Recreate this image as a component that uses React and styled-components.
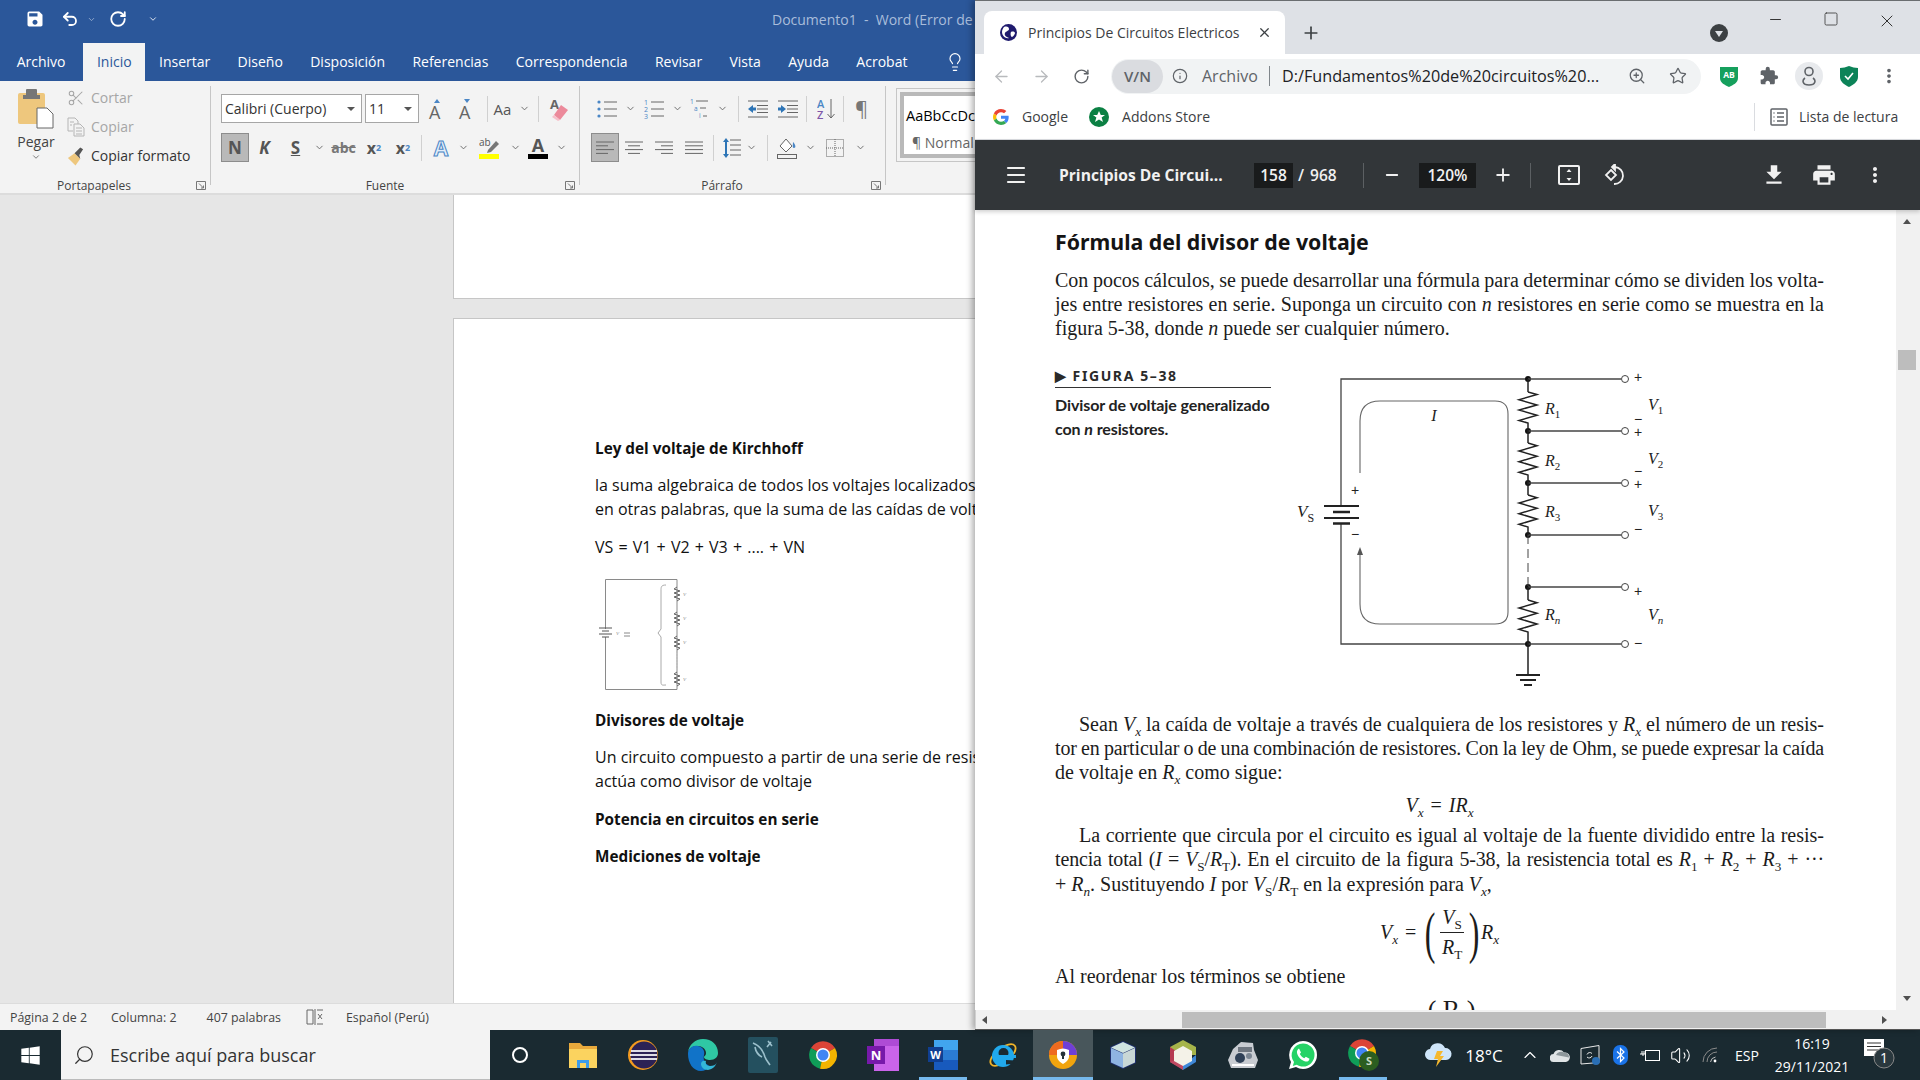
import styled, { createGlobalStyle } from "styled-components";
import {
  ArrowLeft,
  ArrowRight,
  ChevronDown,
  ChevronUp,
  Info,
  Lightbulb,
  Menu,
  Minus,
  Plus,
  RotateCw,
  Scissors,
  Search,
  Square,
  Star,
  Undo2,
  Volume2,
  X,
  ZoomIn,
} from "lucide-react";
import { FaWindows } from "react-icons/fa";
import { MdExtension, MdFileDownload, MdPrint, MdMoreVert, MdSave } from "react-icons/md";

const GlobalStyle = createGlobalStyle`
  html, body {
    margin: 0;
    padding: 0;
    width: 1920px;
    height: 1080px;
    overflow: hidden;
    font-family: "Open Sans", "Noto Sans", sans-serif;
  }
  * { box-sizing: border-box; }
`;

const Screen = styled.div`
  width: 1920px;
  height: 1080px;
  display: flex;
  flex-direction: column;
  overflow: hidden;
`;

const Desktop = styled.div`
  height: 1030px;
  display: flex;
`;

/* ---------- word ---------- */

const WordWindow = styled.div`
  width: 975px;
  flex: none;
  display: flex;
  flex-direction: column;
  overflow: hidden;
`;

const WordTitle = styled.div`
  height: 43px;
  background: #2b579a;
  display: flex;
  align-items: center;
  padding: 0 0 5px 25px;
  color: #fff;
  flex: none;
`;

const QatBtn = styled.span`
  width: ${(p) => p.$w}px;
  flex: none;
  margin-left: ${(p) => p.$ml || 0}px;
  display: flex;
  justify-content: center;
  align-items: center;
`;

const DocName = styled.span`
  margin-left: 605px;
  flex: none;
  font-size: 14px;
  color: #a9bdda;
  white-space: pre;
`;

const TabRow = styled.div`
  height: 38px;
  background: #2b579a;
  display: flex;
  padding-left: 3px;
  flex: none;
`;

const Tab = styled.div`
  padding: 2px 13.7px 0;
  font-size: 14px;
  line-height: 34px;
  flex: none;
  margin-left: ${(p) => p.$ml || 0}px;
  color: ${(p) => (p.$active ? "#2b579a" : "#fff")};
  background: ${(p) => (p.$active ? "#f3f3f3" : "transparent")};
`;

const BulbSlot = styled.div`
  margin-left: 24px;
  display: flex;
  align-items: center;
  color: #fff;
`;

const Ribbon = styled.div`
  height: 114px;
  background: #f3f3f3;
  border-bottom: 2px solid #dcdcdc;
  display: flex;
  flex: none;
`;

const Group = styled.div`
  width: ${(p) => p.$w}px;
  flex: none;
  padding: 5px 0 0;
  display: flex;
  flex-direction: column;
  position: relative;
  &::after {
    content: "";
    position: absolute;
    right: 0;
    top: 5px;
    bottom: 8px;
    width: 1px;
    background: #c6c6c6;
  }
`;

const GroupBody = styled.div`
  height: 91px;
  padding-left: ${(p) => p.$pl || 0}px;
`;

const GroupFoot = styled.div`
  display: grid;
  grid-template-columns: 1fr auto 1fr;
  align-items: center;
  font-size: 12px;
  height: 16px;
  color: #444;
  padding-right: 5px;
  & > svg {
    justify-self: end;
  }
`;

const FootLabel = styled.span`
  grid-column: 2;
  margin-right: ${(p) => p.$shift || 0}px;
`;

const ClipBody = styled.div`
  display: flex;
  height: 91px;
`;

const PasteCol = styled.div`
  width: 72px;
  padding: 3px 0 0;
  color: #444;
  font-size: 14px;
  display: flex;
  flex-direction: column;
  align-items: center;
  line-height: 20px;
`;

const PasteLabel = styled.span`
  margin-top: 3px;
`;

const ClipList = styled.div`
  display: flex;
  flex-direction: column;
  margin-top: -3px;
  margin-left: -5px;
`;

const ClipItem = styled.div`
  height: 29px;
  display: flex;
  align-items: center;
  gap: 6px;
  font-size: 14px;
  color: ${(p) => (p.$off ? "#a6a6a6" : "#333")};
  & > svg {
    width: 18px;
    flex: none;
  }
`;

const ToolRow = styled.div`
  display: flex;
  align-items: center;
  height: 29px;
  margin-top: ${(p) => p.$mt || 0}px;
  margin-left: ${(p) => p.$ml || 0}px;
`;

const Combo = styled.div`
  width: ${(p) => p.$w}px;
  height: 29px;
  flex: none;
  margin-right: ${(p) => p.$mr || 0}px;
  background: #fff;
  border: 1px solid #a6a6a6;
  font-size: 14px;
  color: #333;
  display: flex;
  align-items: center;
  justify-content: space-between;
  padding: 0 6px 0 3px;
  white-space: nowrap;
`;

const Caret = styled.span`
  width: 0;
  height: 0;
  border-left: 4px solid transparent;
  border-right: 4px solid transparent;
  border-top: 4px solid #555;
`;

const Tool = styled.div`
  width: ${(p) => p.$w}px;
  height: 29px;
  flex: none;
  display: flex;
  align-items: center;
  justify-content: center;
  color: ${(p) => p.$c || "#555"};
  font-size: ${(p) => p.$fs || 14}px;
  font-weight: ${(p) => (p.$bold ? 700 : 400)};
  background: ${(p) => (p.$on ? "#b9b9b9" : "transparent")};
  border: ${(p) => (p.$on ? "1px solid #8c8c8c" : "none")};
`;

const OutlineA = styled.span`
  color: #e3eefa;
  font-size: 21px;
  font-weight: 700;
  -webkit-text-stroke: 1px #4a86c5;
`;

const Sup = styled.sup`
  font-size: 9px;
  line-height: 0;
  color: #4a86c5;
`;

const LowSub = styled.sub`
  font-size: 9px;
  line-height: 0;
  color: #4a86c5;
`;

const ToolSep = styled.span`
  width: 1px;
  height: 26px;
  flex: none;
  background: #d0d0d0;
  margin: 0 ${(p) => p.$m ?? 3}px 0 ${(p) => p.$ml ?? 3}px;
`;

const StyleBox = styled.div`
  margin: 7px 0 0 10px;
  width: 90px;
  height: 74px;
  flex: none;
  border: 1px solid #c6c6c6;
  padding: 3px 0 3px 3px;
  background: #f3f3f3;
`;

const StyleInner = styled.div`
  height: 66px;
  border: 4px solid #b9b9b9;
  border-right: none;
  background: #fff;
  padding-left: 2px;
  overflow: hidden;
  white-space: nowrap;
`;

const StyleSample = styled.div`
  font-size: 14.5px;
  line-height: 20px;
  margin-top: 10px;
  color: #000;
`;

const StyleName = styled.div`
  font-size: 14px;
  line-height: 18px;
  margin-top: 8px;
  padding-left: 6px;
  color: #666;
`;

const Canvas = styled.div`
  flex: 1;
  background: #e6e6e6;
  padding-left: 453px;
  overflow: hidden;
`;

const PageTail = styled.div`
  width: 700px;
  height: 104px;
  background: #fff;
  border: 1px solid #c6c6c6;
  border-top: none;
`;

const Page = styled.div`
  width: 700px;
  height: 700px;
  margin-top: 19px;
  background: #fff;
  border: 1px solid #c6c6c6;
  padding: 117px 0 0 141px;
  color: #111;
`;

const DocLine = styled.div`
  line-height: 24px;
  height: 24px;
  margin-top: ${(p) => p.$mt || 0}px;
  font-weight: ${(p) => (p.$bold ? 700 : 400)};
  font-size: ${(p) => (p.$bold ? 15.3 : 16)}px;
  word-spacing: ${(p) => p.$ws || 0}px;
  white-space: nowrap;
`;

const ThumbWrap = styled.div`
  margin: 20px 0 0 -4px;
  height: 113px;
`;

const StatusBar = styled.div`
  height: 27px;
  background: #f3f3f3;
  border-top: 1px solid #dcdcdc;
  flex: none;
  display: flex;
  align-items: center;
  font-size: 12.4px;
  color: #444;
`;

const StatusItem = styled.span`
  margin-left: ${(p) => p.$ml}px;
  display: flex;
`;

/* ---------- chrome ---------- */

const ChromeWindow = styled.div`
  width: 945px;
  flex: none;
  display: flex;
  flex-direction: column;
  position: relative;
  box-shadow: -3px 0 6px rgba(0, 0, 0, 0.3);
  border-bottom: 1px solid #555;
`;

const TabStrip = styled.div`
  height: 54px;
  background: #dee1e6;
  border-top: 1px solid #6a6d70;
  display: flex;
  align-items: flex-end;
  padding-left: 9px;
  flex: none;
`;

const ChromeTab = styled.div`
  width: 301px;
  height: 43px;
  flex: none;
  background: #fff;
  border-radius: 8px 8px 0 0;
  display: flex;
  align-items: center;
  padding-left: 16px;
  font-size: 14px;
  color: #3c4043;
`;

const ChromeTabTitle = styled.span`
  margin-left: 11px;
  width: 229px;
  white-space: nowrap;
`;

const NewTab = styled.div`
  margin-left: 16px;
  height: 43px;
  display: flex;
  align-items: center;
  color: #3c4043;
`;

const ProfileDot = styled.div`
  margin: 0 0 12px 389px;
  width: 18px;
  height: 18px;
  flex: none;
  border-radius: 50%;
  background: #3c4043;
  display: flex;
  align-items: center;
  justify-content: center;
  &::after {
    content: "";
    border-left: 4px solid transparent;
    border-right: 4px solid transparent;
    border-top: 6px solid #dee1e6;
    margin-top: 2px;
  }
`;

const WinControls = styled.div`
  display: flex;
  margin-left: 20px;
  align-self: flex-start;
  padding-top: 10px;
  color: #333;
  & > span {
    width: 55.5px;
    display: flex;
    justify-content: center;
  }
`;

const UrlBar = styled.div`
  height: 44px;
  background: #fff;
  display: flex;
  align-items: center;
  padding-left: 16px;
  flex: none;
  color: #5f6368;
`;

const NavBtn = styled.span`
  width: ${(p) => p.$w || 40}px;
  flex: none;
  margin-left: ${(p) => p.$ml || 0}px;
  display: flex;
  justify-content: center;
  color: ${(p) => p.$c || "#5f6368"};
`;

const Omnibox = styled.div`
  width: 590px;
  height: 35px;
  flex: none;
  margin: 0 8px 0 10px;
  border-radius: 18px;
  background: #f1f3f4;
  display: flex;
  align-items: center;
  font-size: 16px;
`;

const VpnPill = styled.div`
  width: 51px;
  height: 33px;
  flex: none;
  border-radius: 17px;
  background: #dadce0;
  margin-left: 1px;
  margin-right: 9px;
  display: flex;
  align-items: center;
  justify-content: center;
  font-size: 15px;
  font-weight: 600;
  color: #5f6368;
`;

const ArchivoLabel = styled.span`
  width: 68px;
  flex: none;
  margin-left: 14px;
  margin-right: 12px;
  border-right: 1px solid #80868b;
  line-height: 20px;
`;

const UrlText = styled.span`
  width: 335px;
  flex: none;
  color: #202124;
  font-size: 16.2px;
  white-space: nowrap;
  overflow: hidden;
`;

const AvatarRing = styled.span`
  width: 28px;
  height: 28px;
  border-radius: 50%;
  background: #e8eaed;
  display: flex;
  align-items: center;
  justify-content: center;
`;

const BookmarkBar = styled.div`
  height: 42px;
  background: #fff;
  border-bottom: 1px solid #dadce0;
  display: flex;
  align-items: center;
  padding: 0 0 4px 18px;
  font-size: 14px;
  color: #3c4043;
  flex: none;
`;

const Bookmark = styled.span`
  display: flex;
  align-items: center;
  gap: 13px;
  margin-right: ${(p) => p.$mr || 0}px;
`;

const ReadingList = styled.div`
  margin-left: auto;
  width: 166px;
  height: 28px;
  border-left: 1px solid #dadce0;
  display: flex;
  align-items: center;
  gap: 11px;
  padding-left: 15px;
`;

const PdfBar = styled.div`
  height: 70px;
  background: #323639;
  display: flex;
  align-items: center;
  color: #f1f1f1;
  padding-left: 29px;
  flex: none;
  position: relative;
  box-shadow: 0 2px 4px rgba(0, 0, 0, 0.18);
`;

const PdfBtn = styled.span`
  width: ${(p) => p.$w}px;
  flex: none;
  display: flex;
  justify-content: center;
  margin-left: ${(p) => p.$ml || 0}px;
`;

const PdfTitle = styled.span`
  width: 165px;
  flex: none;
  margin-left: 31px;
  margin-right: 30px;
  font-size: 15.6px;
  font-weight: 700;
  white-space: nowrap;
`;

const NumBox = styled.span`
  width: ${(p) => p.$w}px;
  height: 25px;
  flex: none;
  background: #191b1c;
  display: flex;
  align-items: center;
  justify-content: center;
  font-size: 15.5px;
  font-weight: 600;
`;

const PageCount = styled.span`
  width: 70px;
  flex: none;
  padding-left: 5px;
  font-size: 15.5px;
  font-weight: 600;
  word-spacing: 2px;
`;

const PdfSep = styled.span`
  width: 1px;
  height: 25px;
  background: #5c6063;
  flex: none;
`;

const PdfView = styled.div`
  flex: 1;
  display: flex;
  min-height: 0;
  background: #fff;
`;

const PdfSheet = styled.div`
  width: 921px;
  flex: none;
  overflow: hidden;
  padding-left: 80px;
  color: #1c1c1c;
`;

const SheetHeading = styled.div`
  margin-top: 20px;
  height: 24px;
  line-height: 24px;
  font-size: 21.3px;
  font-weight: 700;
  color: #141414;
  font-family: "Noto Sans", sans-serif;
`;

const Para = styled.div`
  width: 769px;
  margin-top: ${(p) => p.$mt || 0}px;
  font-family: "Liberation Serif", serif;
  font-size: 20px;
  line-height: 24.2px;
`;

const TextLine = styled.div`
  text-align: justify;
  text-align-last: ${(p) => (p.$left ? "left" : "justify")};
  text-indent: ${(p) => (p.$indent ? 24 : 0)}px;
  letter-spacing: ${(p) => p.$ls || 0}px;
  word-spacing: ${(p) => (p.$left ? 0 : -2)}px;
  height: 24.2px;
`;

const Figure = styled.div`
  height: 354px;
  margin-top: 17px;
  display: flex;
`;

const FigCaption = styled.div`
  width: 216px;
  flex: none;
  padding-top: 9px;
`;

const FigTag = styled.div`
  height: 21px;
  border-bottom: 1px solid #333;
  font-size: 14px;
  font-weight: 700;
  letter-spacing: 1.6px;
  color: #2a2a2a;
  font-family: "Noto Sans", sans-serif;
  line-height: 18px;
  display: flex;
  gap: 5px;
`;

const FigText = styled.div`
  margin-top: 5px;
  font-size: 16px;
  font-weight: 700;
  letter-spacing: -0.1px;
  line-height: 24px;
  font-family: "Lato", sans-serif;
  color: #222;
  white-space: nowrap;
`;

const EqLine = styled.div`
  width: 769px;
  text-align: center;
  font-family: "Liberation Serif", serif;
  font-size: 20px;
  word-spacing: 2px;
  height: ${(p) => p.$h}px;
  line-height: ${(p) => p.$h}px;
  margin-top: ${(p) => p.$mt || 0}px;
`;

const BigEq = styled.div`
  width: 769px;
  height: 62px;
  margin-top: 6px;
  display: flex;
  justify-content: center;
  align-items: center;
  font-family: "Liberation Serif", serif;
  font-size: 20px;
  font-style: italic;
`;

const EqSign = styled.span`
  font-style: normal;
  margin: 0 7px;
`;

const Paren = styled.span`
  font-size: 58px;
  font-weight: 200;
  font-style: normal;
  line-height: 60px;
  transform: scaleX(0.55);
  width: 14px;
  display: inline-flex;
  justify-content: center;
`;

const Frac = styled.span`
  display: inline-flex;
  flex-direction: column;
  align-items: center;
  margin: 0 3px;
  line-height: 23px;
`;

const FracTop = styled.span`
  border-bottom: 1px solid #222;
  padding: 0 2px 3px;
`;

const FracBottom = styled.span`
  padding-top: 3px;
`;

const PartialEq = styled.div`
  width: 769px;
  text-align: center;
  margin-top: 7px;
  padding-left: 24px;
  font-family: "Liberation Serif", serif;
  font-size: 26px;
  line-height: 30px;
`;

const VScroll = styled.div`
  width: 24px;
  flex: none;
  background: #f1f1f1;
  display: flex;
  flex-direction: column;
  align-items: center;
  padding-right: 3px;
  padding-top: 9px;
`;

const ArrowTip = styled.span`
  width: 0;
  height: 0;
  flex: none;
  border-left: 4px solid transparent;
  border-right: 4px solid transparent;
  ${(p) => (p.$down ? "border-top: 5px solid #505050;" : "border-bottom: 5px solid #505050;")}
  margin-top: ${(p) => p.$mt || 0}px;
`;

const VThumb = styled.span`
  width: 18px;
  height: 20px;
  flex: none;
  background: #bdbdbd;
  margin-top: 126px;
`;

const HScroll = styled.div`
  height: 19px;
  background: #f1f1f1;
  flex: none;
  display: flex;
  align-items: center;
  padding-left: 6px;
  border-left: 1px solid #d0d0d0;
`;

const HArrow = styled.span`
  width: 0;
  height: 0;
  flex: none;
  border-top: 4px solid transparent;
  border-bottom: 4px solid transparent;
  ${(p) => (p.$right ? "border-left: 5px solid #505050;" : "border-right: 5px solid #505050;")}
`;

const HThumb = styled.span`
  width: 644px;
  height: 16px;
  flex: none;
  background: #bdbdbd;
  margin: 0 56px 0 195px;
`;

/* ---------- taskbar ---------- */

const Taskbar = styled.div`
  height: 50px;
  background: #1a2a31;
  display: flex;
  align-items: center;
  color: #fff;
`;

const StartBtn = styled.div`
  width: 61px;
  flex: none;
  display: flex;
  justify-content: center;
`;

const SearchBox = styled.div`
  width: 429px;
  height: 50px;
  flex: none;
  background: #f3f3f3;
  border-bottom: 1px solid #bbb;
  display: flex;
  align-items: center;
  gap: 15px;
  padding-left: 12px;
  font-size: 18px;
  color: #333;
  & > svg {
    transform: scaleX(-1);
  }
`;

const AppRow = styled.div`
  display: flex;
  padding-left: 3px;
  flex: none;
`;

const AppSlot = styled.div`
  width: 60px;
  height: 50px;
  display: flex;
  align-items: center;
  justify-content: center;
  position: relative;
  padding-right: ${(p) => p.$nudge || 0}px;
  background: ${(p) => (p.$active ? "#48565b" : "transparent")};
  &::after {
    content: "";
    position: absolute;
    left: ${(p) => (p.$active ? 0 : 6)}px;
    right: ${(p) => (p.$active ? 0 : 6)}px;
    bottom: 0;
    height: 3px;
    background: ${(p) => (p.$bar ? "#76b9ed" : "transparent")};
  }
`;

const Tray = styled.div`
  display: flex;
  align-items: center;
  margin-left: 30px;
  flex: none;
`;

const TraySlot = styled.div`
  width: ${(p) => p.$w || 30}px;
  height: 50px;
  flex: none;
  display: flex;
  align-items: center;
  justify-content: center;
  font-size: ${(p) => p.$fs || 14}px;
`;

const Clock = styled.div`
  width: 86px;
  flex: none;
  text-align: center;
  font-size: 14px;
  line-height: 23px;
`;

const NotifWrap = styled.div`
  width: 50px;
  height: 50px;
  flex: none;
  display: flex;
  align-items: center;
  justify-content: center;
`;

/* ---------- icons ---------- */

const Launcher = () => (
  <svg width="10" height="9" viewBox="0 0 10 9" fill="none" stroke="#777">
    <path d="M.5 8.5v-8h9v8zM3 2.500l4.500 4.500M7.500 4.500V7H5" />
  </svg>
);

const Chev = ({ size = 11, color = "#666" }) => <ChevronDown size={size} color={color} />;

const PasteIcon = () => (
  <svg width="36" height="40" viewBox="0 0 36 40">
    <rect x="0" y="4" width="27" height="31" rx="2" fill="#eec77d" />
    <rect x="8" y="0" width="11" height="8" rx="1" fill="#777" />
    <path d="M5 6h17v4H5z" fill="#777" />
    <path d="M19 19h10l6 6v14H19z" fill="#fff" stroke="#666" />
  </svg>
);

const CopyIcon = ({ color = "#b5b5b5" }) => (
  <svg width="18" height="20" viewBox="0 0 18 20" fill="none" stroke={color}>
    <path d="M1 1h7l3 3v3M1 1v13h5M7 7h6l4 4v8H7zM9 11h6M9 14h6M9 17h6M3 5h4M3 8h2" />
  </svg>
);

const BrushIcon = () => (
  <svg width="19" height="22" viewBox="0 0 19 22">
    <path d="M1 13l7-5 6 6-5 7z" fill="#eec77d" />
    <path d="M8 8l6-6 3 2-4 6 1 4z" fill="#555" />
  </svg>
);

const GrowA = ({ up }) => (
  <svg width="22" height="24" viewBox="0 0 22 24">
    <text x="1" y="22" fontSize="18" fill="#666" fontFamily="Open Sans">A</text>
    <path d={up ? "M6 6l3-4 3 4z" : "M6 2l3 4 3-4z"} fill="#4a86c5" />
  </svg>
);

const EraserIcon = () => (
  <svg width="20" height="24" viewBox="0 0 20 24">
    <text x="1" y="12" fontSize="13" fontWeight="700" fill="#666" fontFamily="Open Sans">A</text>
    <path d="M12 8l7 5-8 10-6-5z" fill="#ec8a9b" />
    <path d="M5 18l6 5-2 1-6-4z" fill="#f6c0ca" />
  </svg>
);

const ListIcon = ({ kind }) => (
  <svg width="20" height="20" viewBox="0 0 20 20" stroke="#666">
    {[3, 10, 17].map((y, i) => (
      <g key={y}>
        <path d={`M7 ${y}h13`} />
        {kind === "bullet" && <circle cx="2" cy={y} r="1.600" fill="#4a86c5" stroke="none" />}
        {kind === "number" && (
          <text x="0" y={y + 3} fontSize="7" fill="#4a86c5" stroke="none" fontFamily="Open Sans">
            {i + 1}
          </text>
        )}
      </g>
    ))}
  </svg>
);

const MultiIcon = () => (
  <svg width="20" height="20" viewBox="0 0 20 20" stroke="#666">
    <path d="M6 2h12M10 9h6M13 17h4" />
    <text x="0" y="5" fontSize="6.500" fill="#4a86c5" stroke="none" fontFamily="Open Sans">1</text>
    <text x="4" y="12" fontSize="6.500" fill="#4a86c5" stroke="none" fontFamily="Open Sans">a</text>
    <text x="9" y="19" fontSize="6.500" fill="#4a86c5" stroke="none" fontFamily="Open Sans">i</text>
  </svg>
);

const IndentIcon = ({ flip }) => (
  <svg width="20" height="18" viewBox="0 0 20 18">
    <path d="M0 1h20M9 5.500h11M9 9h11M9 12.500h11M0 17h20" stroke="#666" fill="none" />
    <path d={flip ? "M8 9L3 5v2.500H0v3h3V13z" : "M0 9l5-4v2.500h3v3H5V13z"} fill="#2e75b6" />
  </svg>
);

const SortIcon = () => (
  <svg width="18" height="22" viewBox="0 0 18 22">
    <text x="0" y="10" fontSize="11" fill="#4a86c5" fontFamily="Open Sans" fontWeight="600">A</text>
    <text x="0" y="21" fontSize="11" fill="#7e57a8" fontFamily="Open Sans" fontWeight="600">Z</text>
    <path d="M14 1v19M10.500 16l3.500 4 3.500-4" stroke="#666" fill="none" />
  </svg>
);

const AlignIcon = ({ rows }) => (
  <svg width="18" height="16" viewBox="0 0 18 16" stroke="#666" fill="none">
    {rows.map(([a, b], i) => (
      <path key={i} d={`M${a} ${i * 3.8 + 2}H${b}`} />
    ))}
  </svg>
);

const SpacingIcon = () => (
  <svg width="18" height="20" viewBox="0 0 18 20">
    <path d="M7 2h11M7 7h11M7 12h11M7 17h11" stroke="#666" />
    <path d="M3 0l3 4H4v12h2l-3 4-3-4h2V4H0z" fill="#2e75b6" />
  </svg>
);

const ShadeIcon = () => (
  <svg width="20" height="22" viewBox="0 0 20 22" fill="none" stroke="#666">
    <path d="M3 9l6-7 6 7-6 6z" fill="#fff" />
    <path d="M16 5c3 3 3 6 1 6s-1-3-1-6z" fill="#4a86c5" stroke="none" />
    <rect x=".5" y="17.500" width="19" height="4" />
  </svg>
);

const BorderIcon = () => (
  <svg width="18" height="18" viewBox="0 0 18 18" fill="none" stroke="#666" strokeDasharray="1 1">
    <rect x=".5" y=".5" width="17" height="17" />
    <path d="M9 0v18M0 9h18" />
  </svg>
);

const GlobeIcon = () => (
  <svg width="17" height="17" viewBox="0 0 17 17">
    <circle cx="8.500" cy="8.500" r="8.500" fill="#1f1a6e" />
    <path d="M4 3c3-1 5 0 5 2S6 7 5 9 6 13 9 14c-3 1-7-2-7-6 0-2 1-4 2-5zM11 8c2-1 4 0 4 1s-2 4-3 4-2-3-1-5z" fill="#fff" />
  </svg>
);

const ABShield = () => (
  <svg width="18" height="21" viewBox="0 0 18 21">
    <path d="M0 1h18v11c0 5-5 7-9 9-4-2-9-4-9-9z" fill="#16a05d" />
    <text x="9" y="12" textAnchor="middle" fontSize="8.500" fontWeight="700" fill="#fff" fontFamily="Open Sans">AB</text>
  </svg>
);

const CheckShield = () => (
  <svg width="18" height="21" viewBox="0 0 18 21">
    <path d="M0 2c3 0 6-1 9-2 3 1 6 2 9 2v9c0 5-5 8-9 10-4-2-9-5-9-10z" fill="#0c8358" />
    <path d="M5 10l3 3 5-6" stroke="#fff" strokeWidth="1.600" fill="none" />
  </svg>
);

const GoogleIcon = () => (
  <svg width="16" height="16" viewBox="0 0 48 48">
    <path fill="#EA4335" d="M24 9.500c3.500 0 6.700 1.200 9.200 3.600l6.900-6.900C35.900 2.400 30.500 0 24 0 14.600 0 6.500 5.400 2.600 13.200l8 6.200C12.400 13.700 17.700 9.500 24 9.500z" />
    <path fill="#4285F4" d="M47 24.500c0-1.600-.1-3.100-.4-4.500H24v9h13c-.6 3-2.300 5.500-4.800 7.200l7.700 6C44.300 38.600 47 32.100 47 24.500z" />
    <path fill="#FBBC05" d="M10.600 28.600c-.5-1.400-.8-3-.8-4.600s.3-3.200.8-4.600l-8-6.200C.9 16.500 0 20.100 0 24s.9 7.500 2.600 10.800z" />
    <path fill="#34A853" d="M24 48c6.500 0 11.900-2.100 15.900-5.800l-7.700-6c-2.200 1.500-5 2.300-8.200 2.300-6.300 0-11.600-4.200-13.400-9.900l-8 6.200C6.500 42.600 14.600 48 24 48z" />
  </svg>
);

const AddonIcon = () => (
  <svg width="20" height="20" viewBox="0 0 20 20">
    <circle cx="10" cy="10" r="10" fill="#0b8043" />
    <path d="M10 4l1.800 4H16l-3.400 2.600L14 15l-4-2.600L6 15l1.400-4.400L4 8h4.200z" fill="#fff" />
  </svg>
);

const ReadListIcon = () => (
  <svg width="18" height="18" viewBox="0 0 18 18" fill="none" stroke="#5f6368" strokeWidth="1.500">
    <rect x="1" y="1" width="16" height="16" rx="1" />
    <path d="M7 5h7M7 9h7M7 13h7M3.500 5h1M3.500 9h1M3.500 13h1" />
  </svg>
);

const FitIcon = () => (
  <svg width="22" height="20" viewBox="0 0 22 20" fill="none" stroke="#f1f1f1" strokeWidth="2">
    <rect x="1" y="1" width="20" height="18" rx="1" />
    <path d="M11 4l2.500 3h-5zM11 16l2.500-3h-5z" fill="#f1f1f1" strokeWidth="0" />
  </svg>
);

const RotateIcon = () => (
  <svg width="22" height="22" viewBox="0 0 22 22" fill="none" stroke="#f1f1f1" strokeWidth="1.800">
    <path d="M11 3a8.500 8.500 0 1 1-1 17" />
    <path d="M11 0v6l-3-3z" fill="#f1f1f1" />
    <path d="M7 6l5 5-5 5-5-5z" />
  </svg>
);

const chromeSectors = (
  <>
    <path d="M16 16L4 9A14 14 0 0 1 28 9z" fill="#db4437" />
    <path d="M16 16L4 9A14 14 0 0 0 13 29.700z" fill="#0f9d58" />
    <path d="M16 16L28 9A14 14 0 0 1 13 29.700z" fill="#f4b400" />
    <circle cx="16" cy="16" r="7" fill="#fff" />
    <circle cx="16" cy="16" r="5.500" fill="#4285f4" />
  </>
);

const ChromeIcon = ({ badge }) => (
  <svg width="34" height="34" viewBox="0 0 34 34">
    <g transform={badge ? "translate(0 -1)" : "translate(1 1)"}>{chromeSectors}</g>
    {badge && (
      <>
        <circle cx="23" cy="23" r="10" fill="#2b5e20" />
        <text x="23" y="27" textAnchor="middle" fontSize="11" fontWeight="700" fill="#c9d8c0" fontFamily="Open Sans">S</text>
      </>
    )}
  </svg>
);

const FolderIcon = () => (
  <svg width="30" height="30" viewBox="0 0 30 30">
    <path d="M1 3h11l3 3h14v22H1z" fill="#e8a93c" />
    <path d="M1 9h28v19H1z" fill="#fbd35f" />
    <path d="M9 28v-8h12v8h-3v-5h-6v5z" fill="#3d9be9" />
  </svg>
);

const EclipseIcon = () => (
  <svg width="30" height="30" viewBox="0 0 30 30">
    <circle cx="15" cy="15" r="15" fill="#f39a1f" />
    <circle cx="16" cy="15" r="13.500" fill="#2c2255" />
    <path d="M3 11h26M2 15h27M3 19h26" stroke="#fff" strokeWidth="2" opacity=".85" />
  </svg>
);

const EdgeIcon = () => (
  <svg width="30" height="32" viewBox="0 0 30 32">
    <path d="M15 0c9 0 15 6 15 14 0 4-3 7-8 7-3 0-6-1-6-3 0-1 2-1 2-4 0-4-4-7-8-7S2 8 0 13C1 6 7 0 15 0z" fill="#2fc8a4" />
    <path d="M0 15c0-6 5-9 10-8 5 1 7 5 6 9-1 4 0 9 6 11-2 3-6 5-9 5C5 32 0 24 0 15z" fill="#1173c8" />
    <path d="M22 27c3 0 6-1 7-4-2 5-4 7-9 8-4 0-7-3-7-6s3-4 5-3c-1 3 1 5 4 5z" fill="#34b6d8" />
  </svg>
);

const MysqlIcon = () => (
  <svg width="30" height="36" viewBox="0 0 30 36">
    <rect width="30" height="36" rx="2" fill="#24505f" />
    <path d="M5 6c5 2 10 7 12 14 1 3 3 5 5 8M7 10c1 6 5 9 7 10M20 4l4 5M23 5l-4 5" stroke="#9cc0cc" strokeWidth="1.600" fill="none" />
  </svg>
);

const NoteIcon = () => (
  <svg width="32" height="32" viewBox="0 0 32 32">
    <rect x="7" y="0" width="25" height="32" fill="#ca64ea" />
    <rect x="7" y="0" width="25" height="7" fill="#ae4bd5" />
    <rect x="0" y="7" width="18" height="18" fill="#7719aa" />
    <text x="9" y="21" textAnchor="middle" fontSize="13" fontWeight="700" fill="#fff" fontFamily="Open Sans">N</text>
  </svg>
);

const WordIcon = () => (
  <svg width="30" height="30" viewBox="0 0 30 30">
    <rect x="6" y="0" width="24" height="10" fill="#41a5ee" />
    <rect x="6" y="10" width="24" height="10" fill="#2b7cd3" />
    <rect x="6" y="20" width="24" height="10" fill="#185abd" />
    <rect x="0" y="7" width="15" height="15" fill="#103f91" />
    <text x="7.500" y="19" textAnchor="middle" fontSize="11" fontWeight="700" fill="#fff" fontFamily="Open Sans">W</text>
  </svg>
);

const IeIcon = () => (
  <svg width="30" height="30" viewBox="0 0 30 30">
    <ellipse cx="15" cy="15" rx="15" ry="7" transform="rotate(-38 15 15)" fill="none" stroke="#f0b429" strokeWidth="1.800" />
    <circle cx="15" cy="16" r="11" fill="#21a9ec" />
    <circle cx="15.500" cy="13" r="5" fill="#1a2a31" />
    <rect x="8" y="15" width="20" height="3" fill="#21a9ec" />
    <path d="M18 20l9 .5v3l-9 1z" fill="#1a2a31" />
  </svg>
);

const VaultIcon = () => (
  <svg width="28" height="28" viewBox="0 0 28 28">
    <circle cx="14" cy="14" r="14" fill="#f1a40e" />
    <path d="M14 0a14 14 0 0 1 14 14H14z" fill="#6f3fd6" />
    <path d="M0 14a14 14 0 0 1 14-14v14z" fill="#ee6a1f" />
    <path d="M8 9c4-2 8-2 12 0v6c0 4-3 6-6 8-3-2-6-4-6-8z" fill="#fff" />
    <circle cx="14" cy="13" r="2.400" fill="#263238" />
    <rect x="13" y="14" width="2" height="4" fill="#263238" />
  </svg>
);

const CubeIcon = () => (
  <svg width="26" height="28" viewBox="0 0 26 28">
    <path d="M13 0l13 6v16l-13 6-13-6V6z" fill="#1f2f6c" />
    <path d="M13 1l12 5.500L13 12 1 6.500z" fill="#cfe3e0" />
    <path d="M1 7l12 5.500v14.500L1 21.500z" fill="#8fb4e2" />
    <path d="M25 7l-12 5.500v14.500l12-5.500z" fill="#c9d7d6" />
  </svg>
);

const GemIcon = () => (
  <svg width="26" height="30" viewBox="0 0 26 30">
    <path d="M13 0l13 7v8H0V7z" fill="#a6b44a" />
    <path d="M0 7v15l9 5V13z" fill="#b63a52" />
    <path d="M26 15v7l-13 8-4-3 8-5z" fill="#3f88d8" />
    <path d="M0 22l13 8 0-5-8-5z" fill="#c04a63" />
    <path d="M13 6l9 5v10l-9 5-9-5V11z" fill="#f4f2e8" />
  </svg>
);

const ScannerIcon = () => (
  <svg width="30" height="28" viewBox="0 0 30 28">
    <path d="M5 8l8-7 12 1 1 7 4 10-3 8H3l-3-8z" fill="#c8ccd2" />
    <path d="M10 6h14v5H10z" fill="#6e7680" />
    <circle cx="12" cy="17" r="5" fill="#2e4057" />
    <circle cx="21" cy="15" r="3" fill="#7b8693" />
    <path d="M4 24h22" stroke="#fff" strokeWidth="2" />
  </svg>
);

const WhatsIcon = () => (
  <svg width="28" height="28" viewBox="0 0 28 28">
    <path d="M14 0a14 14 0 0 1 0 28c-2.500 0-5-.7-7-2l-7 2 2-7A14 14 0 0 1 14 0z" fill="#fff" />
    <path d="M14 2.500a11.500 11.500 0 0 1 0 23c-2.300 0-4.400-.7-6.200-1.800l-4 1.200 1.200-4A11.500 11.500 0 0 1 14 2.500z" fill="#25d366" />
    <path d="M10 7.500l2 4-1.200 1.500c1 2 2.500 3.300 4.500 4.200l1.500-1.400 3.700 1.900c-.4 2.300-2.200 3.200-4 2.800-4-1-7.500-4.300-8.500-8.500-.4-2 .7-3.800 2-4.500z" fill="#fff" />
  </svg>
);

const WeatherIcon = () => (
  <svg width="28" height="26" viewBox="0 0 28 26">
    <path d="M7 18a5.500 5.500 0 0 1-1-11 8 8 0 0 1 15-1 6 6 0 0 1 1 12z" fill="#cfe6fa" />
    <path d="M13 9h6l-3 5h4l-8 11 2-8H10z" fill="#f5b82e" />
  </svg>
);

const CloudIcon = () => (
  <svg width="20" height="13" viewBox="0 0 20 13">
    <path d="M4 13a4 4 0 0 1-.5-8A6 6 0 0 1 14 3.500a4.500 4.500 0 0 1 2 9.500z" fill="#dfe3e5" />
    <path d="M6 6a6 6 0 0 1 8-2.500 4.500 4.500 0 0 1 5 5z" fill="#8d979b" />
  </svg>
);

const SyncIcon = () => (
  <svg width="20" height="20" viewBox="0 0 20 20" fill="none" stroke="#e8e8e8">
    <path d="M1 3.500L19 .5v17l-18 1.500z" />
    <path d="M7 9.500a3 3 0 0 1 5-1M12 11a3 3 0 0 1-5 1" />
    <circle cx="16" cy="16" r="4" fill="#2a6fb5" stroke="none" />
  </svg>
);

const BtIcon = () => (
  <svg width="15" height="20" viewBox="0 0 15 20">
    <rect width="15" height="20" rx="7" fill="#1a73e8" />
    <path d="M4 6.500l7 6.500-3.500 3.500V3.500L11 7l-7 6.500" stroke="#fff" strokeWidth="1.200" fill="none" />
  </svg>
);

const BatteryIcon = () => (
  <svg width="20" height="14" viewBox="0 0 20 14" fill="none" stroke="#fff">
    <rect x="5.500" y="2.500" width="14" height="10" />
    <path d="M0 6h5M2 3v3M4 3v3M3 6v2" />
  </svg>
);

const WifiIcon = () => (
  <svg width="16" height="16" viewBox="0 0 16 16" fill="none" stroke="#777">
    <path d="M1 15A14 14 0 0 1 15 1M5 15a10 10 0 0 1 10-10" stroke="#8a8a8a" />
    <path d="M8.500 15a6 6 0 0 1 5-5" stroke="#bbb" />
    <circle cx="13" cy="14" r="1.400" fill="#fff" stroke="none" />
  </svg>
);

const NotifIcon = () => (
  <svg width="32" height="32" viewBox="0 0 32 32">
    <path d="M0 0h20v17H0z" fill="#fff" />
    <path d="M3 4h14M3 7.500h14M3 11h11" stroke="#333" />
    <circle cx="20" cy="19" r="10" fill="#2a383e" stroke="#888" strokeWidth="1" />
    <text x="20" y="24" textAnchor="middle" fontSize="14" fill="#fff" fontFamily="Open Sans">1</text>
  </svg>
);

const zigzag = (x, y0, y1) => {
  const step = (y1 - y0) / 6;
  let d = `M${x} ${y0}`;
  for (let i = 0; i < 6; i++) {
    const side = i % 2 === 0 ? 9 : -9;
    d += `L${x + side} ${y0 + step * (i + 0.5)}`;
  }
  return d + `L${x} ${y1}`;
};

// coordinates here are the page's own, the viewBox cuts out the figure
const CircuitFigure = () => {
  const nodes = [379, 431, 483, 535, 587, 644];
  const x = 1528;
  const term = 1625;
  const vLabel = (sub, y) => (
    <text x="1648" y={y} fontSize="16" fontStyle="italic" fontFamily="Liberation Serif">
      V<tspan fontSize="11" dy="4" fontStyle={sub === "n" ? "italic" : "normal"}>{sub}</tspan>
    </text>
  );
  const rLabel = (sub, y) => (
    <text x="1545" y={y} fontSize="16" fontStyle="italic" fontFamily="Liberation Serif">
      R<tspan fontSize="11" dy="4" fontStyle={sub === "n" ? "italic" : "normal"}>{sub}</tspan>
    </text>
  );
  const sign = (s, sx, y) => (
    <text x={sx} y={y} fontSize="14" textAnchor="middle" fontFamily="Liberation Sans">{s}</text>
  );
  return (
    <svg width="400" height="354" viewBox="1271 358 400 354" fill="#222">
      <path d={`M${x} 379H1341V506M1341 523V644H${x}`} fill="none" stroke="#444" strokeWidth="1.300" />
      {nodes.map((y) => (
        <g key={y}>
          <circle cx={x} cy={y} r="3" fill="#111" />
          <path d={`M${x} ${y}H${term - 4}`} stroke="#444" strokeWidth="1.300" />
          <circle cx={term} cy={y} r="3.500" fill="#fff" stroke="#444" />
        </g>
      ))}
      <g fill="none" stroke="#222" strokeWidth="1.500">
        <path d={`M${x} 379V392${zigzag(x, 392, 423)}V431`} />
        <path d={`M${x} 431V443${zigzag(x, 443, 475)}V483`} />
        <path d={`M${x} 483V495${zigzag(x, 495, 527)}V535`} />
        <path d={`M${x} 587V600${zigzag(x, 600, 632)}V675`} />
      </g>
      <path d={`M${x} 535V587`} stroke="#444" strokeDasharray="9 5" />
      <g stroke="#222" strokeWidth="2">
        <path d="M1324 506H1359M1324 518H1359" />
        <path d="M1333 512H1350M1333 523.500H1350" strokeWidth="2.500" />
        <path d="M1516 675H1540" />
        <path d="M1520 680H1536" />
        <path d="M1524 685H1532" />
      </g>
      <path
        d="M1360 473V421Q1360 401 1380 401H1495Q1508 401 1508 414V612Q1508 624 1495 624H1380Q1360 624 1360 604V552"
        fill="none"
        stroke="#666"
        strokeWidth="1.100"
      />
      <path d="M1360 547l-3 8h6z" fill="#555" />
      <text x="1434" y="421" fontSize="16" fontStyle="italic" fontFamily="Liberation Serif" textAnchor="middle">I</text>
      <text x="1297" y="517" fontSize="17" fontStyle="italic" fontFamily="Liberation Serif">
        V<tspan fontSize="12" dy="5" fontStyle="normal">S</tspan>
      </text>
      {sign("+", 1355, 495)}
      {sign("−", 1355, 539)}
      {rLabel("1", 414)}
      {rLabel("2", 466)}
      {rLabel("3", 517)}
      {rLabel("n", 620)}
      {vLabel("1", 410)}
      {vLabel("2", 464)}
      {vLabel("3", 516)}
      {vLabel("n", 620)}
      {sign("+", 1638, 382)}
      {sign("−", 1638, 424)}
      {sign("+", 1638, 437)}
      {sign("−", 1638, 476)}
      {sign("+", 1638, 489)}
      {sign("−", 1638, 534)}
      {sign("+", 1638, 596)}
      {sign("−", 1638, 648)}
    </svg>
  );
};

const ThumbCircuit = () => (
  <svg width="96" height="113" viewBox="0 0 96 113" fill="none" stroke="#8a8a8a">
    <path d="M14.500 .5H86V110.500H14.500V58M14.500 50V.5" />
    <path d="M75 6C70 6 70 8 70 12V50L67 54L70 58V103C70 107 72 106 75 106" stroke="#aaa" />
    <path d="M86 8l-3 2 6 2-6 2 6 2-6 2 6 2-3 2M86 33l-3 2 6 2-6 2 6 2-6 2 6 2-3 2M86 57l-3 2 6 2-6 2 6 2-6 2 6 2-3 2M86 93l-3 2 6 2-6 2 6 2-6 2 6 2-3 2" stroke="#666" />
    <path d="M86 72V90" stroke="#bbb" strokeDasharray="2 1" />
    <path d="M8 49h13M11 52h7M8 55h13M11 58h7" stroke="#555" />
    <path d="M33 54h6M33 57h6" stroke="#888" />
    <g stroke="none" fill="#888" fontSize="5" fontFamily="Liberation Serif" fontStyle="italic">
      <text x="92" y="17">V</text>
      <text x="92" y="41">V</text>
      <text x="92" y="65">V</text>
      <text x="92" y="102">V</text>
      <text x="25" y="56">V</text>
    </g>
  </svg>
);

const Sub = styled.sub`
  font-size: 0.66em;
  line-height: 0;
  font-style: ${(p) => (p.$it ? "italic" : "normal")};
`;

const I = styled.i``;

export default function App() {
  return (
    <Screen>
      <GlobalStyle />
      <Desktop>
        <WordWindow>
          <WordTitle>
            <QatBtn $w={20}><MdSave size={20} /></QatBtn>
            <QatBtn $w={30} $ml={10}><Undo2 size={18} strokeWidth={2.4} /></QatBtn>
            <QatBtn $w={12}><ChevronDown size={9} color="#a9bdda" /></QatBtn>
            <QatBtn $w={42}><RotateCw size={18} strokeWidth={2.4} /></QatBtn>
            <QatBtn $w={28}><ChevronDown size={10} /></QatBtn>
            <DocName>Documento1  -  Word (Error de activación de productos)</DocName>
          </WordTitle>
          <TabRow>
            <Tab>Archivo</Tab>
            <Tab $active $ml={4}>Inicio</Tab>
            <Tab>Insertar</Tab>
            <Tab>Diseño</Tab>
            <Tab>Disposición</Tab>
            <Tab>Referencias</Tab>
            <Tab>Correspondencia</Tab>
            <Tab>Revisar</Tab>
            <Tab>Vista</Tab>
            <Tab>Ayuda</Tab>
            <Tab>Acrobat</Tab>
            <BulbSlot><Lightbulb size={20} strokeWidth={1.4} /></BulbSlot>
          </TabRow>
          <Ribbon>
            <Group $w={211}>
              <ClipBody>
                <PasteCol>
                  <PasteIcon />
                  <PasteLabel>Pegar</PasteLabel>
                  <Chev size={10} />
                </PasteCol>
                <ClipList>
                  <ClipItem $off><Scissors size={18} strokeWidth={1.4} />Cortar</ClipItem>
                  <ClipItem $off><CopyIcon />Copiar</ClipItem>
                  <ClipItem><BrushIcon />Copiar formato</ClipItem>
                </ClipList>
              </ClipBody>
              <GroupFoot><FootLabel $shift={18}>Portapapeles</FootLabel><Launcher /></GroupFoot>
            </Group>
            <Group $w={369}>
              <GroupBody $pl={10}>
                <ToolRow $mt={8}>
                  <Combo $w={141} $mr={3}>Calibri (Cuerpo)<Caret /></Combo>
                  <Combo $w={54} $mr={5}>11<Caret /></Combo>
                  <Tool $w={30}><GrowA up /></Tool>
                  <Tool $w={30}><GrowA /></Tool>
                  <ToolSep $m={0} />
                  <Tool $w={29} $fs={15}>Aa</Tool>
                  <Tool $w={14}><Chev /></Tool>
                  <ToolSep $ml={7} $m={5} />
                  <Tool $w={30}><EraserIcon /></Tool>
                </ToolRow>
                <ToolRow $mt={10}>
                  <Tool $w={28} $on $bold $fs={17}>N</Tool>
                  <Tool $w={31} $bold $fs={17}><I>K</I></Tool>
                  <Tool $w={31} $bold $fs={17}><u>S</u></Tool>
                  <Tool $w={16}><Chev /></Tool>
                  <Tool $w={33} $fs={14} $bold $c="#777"><s>abc</s></Tool>
                  <Tool $w={28} $bold $fs={16}>x<LowSub>2</LowSub></Tool>
                  <Tool $w={30} $bold $fs={16}>x<Sup>2</Sup></Tool>
                  <ToolSep $ml={3} $m={4} />
                  <Tool $w={30}><OutlineA>A</OutlineA></Tool>
                  <Tool $w={15}><Chev /></Tool>
                  <Tool $w={36}>
                    <svg width="20" height="22" viewBox="0 0 20 22">
                      <text x="0" y="9" fontSize="10" fill="#555" fontFamily="Open Sans">ab</text>
                      <path d="M9 13l8-9 3 3-8 8-4 1z" fill="#777" />
                      <rect x="0" y="17" width="20" height="5" fill="#ffff00" />
                    </svg>
                  </Tool>
                  <Tool $w={16}><Chev /></Tool>
                  <Tool $w={30}>
                    <svg width="20" height="22" viewBox="0 0 20 22">
                      <text x="10" y="15" textAnchor="middle" fontSize="18" fontWeight="700" fill="#555" fontFamily="Open Sans">A</text>
                      <rect x="0" y="17" width="20" height="5" fill="#000" />
                    </svg>
                  </Tool>
                  <Tool $w={16}><Chev /></Tool>
                </ToolRow>
              </GroupBody>
              <GroupFoot><FootLabel $shift={16}>Fuente</FootLabel><Launcher /></GroupFoot>
            </Group>
            <Group $w={306}>
              <GroupBody $pl={13}>
                <ToolRow $mt={8}>
                  <Tool $w={28}><ListIcon kind="bullet" /></Tool>
                  <Tool $w={19}><Chev /></Tool>
                  <Tool $w={28}><ListIcon kind="number" /></Tool>
                  <Tool $w={19}><Chev /></Tool>
                  <Tool $w={26}><MultiIcon /></Tool>
                  <Tool $w={18}><Chev /></Tool>
                  <ToolSep $ml={7} $m={4} />
                  <Tool $w={30}><IndentIcon /></Tool>
                  <Tool $w={30}><IndentIcon flip /></Tool>
                  <ToolSep $ml={3} $m={5} />
                  <Tool $w={27}><SortIcon /></Tool>
                  <ToolSep $ml={4} $m={2} />
                  <Tool $w={31} $fs={20} $c="#777">¶</Tool>
                </ToolRow>
                <ToolRow $mt={10} $ml={-2}>
                  <Tool $w={28} $on><AlignIcon rows={[[0, 18], [0, 12], [0, 18], [0, 12]]} /></Tool>
                  <Tool $w={30}><AlignIcon rows={[[0, 18], [3, 15], [0, 18], [3, 15]]} /></Tool>
                  <Tool $w={30}><AlignIcon rows={[[0, 18], [6, 18], [0, 18], [6, 18]]} /></Tool>
                  <Tool $w={30}><AlignIcon rows={[[0, 18], [0, 18], [0, 18], [0, 18]]} /></Tool>
                  <ToolSep $ml={4} $m={6} />
                  <Tool $w={24}><SpacingIcon /></Tool>
                  <Tool $w={14}><Chev /></Tool>
                  <ToolSep $ml={9} $m={6} />
                  <Tool $w={26}><ShadeIcon /></Tool>
                  <Tool $w={20}><Chev /></Tool>
                  <Tool $w={30}><BorderIcon /></Tool>
                  <Tool $w={20}><Chev /></Tool>
                </ToolRow>
              </GroupBody>
              <GroupFoot><FootLabel $shift={17}>Párrafo</FootLabel><Launcher /></GroupFoot>
            </Group>
            <StyleBox>
              <StyleInner>
                <StyleSample>AaBbCcDc</StyleSample>
                <StyleName>¶ Normal</StyleName>
              </StyleInner>
            </StyleBox>
          </Ribbon>
          <Canvas>
            <PageTail />
            <Page>
              <DocLine $bold>Ley del voltaje de Kirchhoff</DocLine>
              <DocLine $mt={13}>la suma algebraica de todos los voltajes localizados en una trayectoria</DocLine>
              <DocLine>en otras palabras, que la suma de las caídas de voltaje es igual</DocLine>
              <DocLine $mt={14} $ws={1}>VS = V1 + V2 + V3 + .... + VN</DocLine>
              <ThumbWrap><ThumbCircuit /></ThumbWrap>
              <DocLine $mt={16} $bold>Divisores de voltaje</DocLine>
              <DocLine $mt={13}>Un circuito compuesto a partir de una serie de resistores conectados</DocLine>
              <DocLine>actúa como divisor de voltaje</DocLine>
              <DocLine $mt={14} $bold>Potencia en circuitos en serie</DocLine>
              <DocLine $mt={13} $bold>Mediciones de voltaje</DocLine>
            </Page>
          </Canvas>
          <StatusBar>
            <StatusItem $ml={10}>Página 2 de 2</StatusItem>
            <StatusItem $ml={24}>Columna: 2</StatusItem>
            <StatusItem $ml={30}>407 palabras</StatusItem>
            <StatusItem $ml={25}>
              <svg width="18" height="16" viewBox="0 0 18 16" fill="none" stroke="#666">
                <path d="M1 1h6v14H1zM11 1h6M11 15h6M9 0v16" />
                <path d="M12 5l4 5M16 5l-4 5" />
              </svg>
            </StatusItem>
            <StatusItem $ml={22}>Español (Perú)</StatusItem>
          </StatusBar>
        </WordWindow>

        <ChromeWindow>
          <TabStrip>
            <ChromeTab>
              <GlobeIcon />
              <ChromeTabTitle>Principios De Circuitos Electricos</ChromeTabTitle>
              <X size={15} strokeWidth={2} />
            </ChromeTab>
            <NewTab><Plus size={20} strokeWidth={2} /></NewTab>
            <ProfileDot />
            <WinControls>
              <span><Minus size={17} strokeWidth={1.4} /></span>
              <span><Square size={16} strokeWidth={1.2} /></span>
              <span><X size={20} strokeWidth={1.2} /></span>
            </WinControls>
          </TabStrip>
          <UrlBar>
            <NavBtn $w={20} $c="#b8babd"><ArrowLeft size={19} strokeWidth={1.6} /></NavBtn>
            <NavBtn $ml={10} $c="#b8babd"><ArrowRight size={19} strokeWidth={1.6} /></NavBtn>
            <NavBtn $w={40}><RotateCw size={17} strokeWidth={2} /></NavBtn>
            <Omnibox>
              <VpnPill>V/N</VpnPill>
              <Info size={16} strokeWidth={1.8} />
              <ArchivoLabel>Archivo</ArchivoLabel>
              <UrlText>D:/Fundamentos%20de%20circuitos%20...</UrlText>
              <NavBtn $w={40}><ZoomIn size={18} strokeWidth={1.7} /></NavBtn>
              <NavBtn $w={42}><Star size={18} strokeWidth={1.7} /></NavBtn>
            </Omnibox>
            <NavBtn $w={40}><ABShield /></NavBtn>
            <NavBtn $w={40}><MdExtension size={20} /></NavBtn>
            <NavBtn $w={40}>
              <AvatarRing>
                <svg width="14" height="20" viewBox="0 0 14 20" fill="none" stroke="#5f6368" strokeWidth="1.600">
                  <circle cx="7" cy="5.500" r="4" />
                  <path d="M3 12c-3 2-3 7 4 7s7-5 4-7" />
                </svg>
              </AvatarRing>
            </NavBtn>
            <NavBtn $w={40}><CheckShield /></NavBtn>
            <NavBtn $w={40}><MdMoreVert size={22} /></NavBtn>
          </UrlBar>
          <BookmarkBar>
            <Bookmark $mr={21}><GoogleIcon />Google</Bookmark>
            <Bookmark><AddonIcon />Addons Store</Bookmark>
            <ReadingList><ReadListIcon />Lista de lectura</ReadingList>
          </BookmarkBar>
          <PdfBar>
            <Menu size={24} strokeWidth={2.2} />
            <PdfTitle>Principios De Circui...</PdfTitle>
            <NumBox $w={39}>158</NumBox>
            <PageCount>/ 968</PageCount>
            <PdfSep />
            <PdfBtn $w={55}><Minus size={18} strokeWidth={2.4} /></PdfBtn>
            <NumBox $w={57}>120%</NumBox>
            <PdfBtn $w={54}><Plus size={20} strokeWidth={2.2} /></PdfBtn>
            <PdfSep />
            <PdfBtn $w={22} $ml={27}><FitIcon /></PdfBtn>
            <PdfBtn $w={24} $ml={23}><RotateIcon /></PdfBtn>
            <PdfBtn $w={28} $ml={133}><MdFileDownload size={26} /></PdfBtn>
            <PdfBtn $w={28} $ml={22}><MdPrint size={26} /></PdfBtn>
            <PdfBtn $w={24} $ml={25}><MdMoreVert size={24} /></PdfBtn>
          </PdfBar>
          <PdfView>
            <PdfSheet>
              <SheetHeading>Fórmula del divisor de voltaje</SheetHeading>
              <Para $mt={14}>
                <TextLine>Con pocos cálculos, se puede desarrollar una fórmula para determinar cómo se dividen los volta-</TextLine>
                <TextLine>jes entre resistores en serie. Suponga un circuito con <I>n</I> resistores en serie como se muestra en la</TextLine>
                <TextLine $left>figura 5-38, donde <I>n</I> puede ser cualquier número.</TextLine>
              </Para>
              <Figure>
                <FigCaption>
                  <FigTag><span>▶</span><span>FIGURA 5–38</span></FigTag>
                  <FigText>Divisor de voltaje generalizado<br />con <I>n</I> resistores.</FigText>
                </FigCaption>
                <CircuitFigure />
              </Figure>
              <Para>
                <TextLine $indent>Sean <I>V<Sub $it>x</Sub></I> la caída de voltaje a través de cualquiera de los resistores y <I>R<Sub $it>x</Sub></I> el número de un resis-</TextLine>
                <TextLine $ls={-0.15}>tor en particular o de una combinación de resistores. Con la ley de Ohm, se puede expresar la caída</TextLine>
                <TextLine $left>de voltaje en <I>R<Sub $it>x</Sub></I> como sigue:</TextLine>
              </Para>
              <EqLine $h={24} $mt={9}><I>V<Sub $it>x</Sub></I> = <I>IR<Sub $it>x</Sub></I></EqLine>
              <Para $mt={6}>
                <TextLine $indent>La corriente que circula por el circuito es igual al voltaje de la fuente dividido entre la resis-</TextLine>
                <TextLine $ls={-0.15}>tencia total (<I>I</I> = <I>V</I><Sub>S</Sub>/<I>R</I><Sub>T</Sub>). En el circuito de la figura 5-38, la resistencia total es <I>R</I><Sub>1</Sub> + <I>R</I><Sub>2</Sub> + <I>R</I><Sub>3</Sub> + ···</TextLine>
                <TextLine $left>+ <I>R<Sub $it>n</Sub></I>. Sustituyendo <I>I</I> por <I>V</I><Sub>S</Sub>/<I>R</I><Sub>T</Sub> en la expresión para <I>V<Sub $it>x</Sub></I>,</TextLine>
              </Para>
              <BigEq>
                <span>V<Sub $it>x</Sub></span>
                <EqSign>=</EqSign>
                <Paren>(</Paren>
                <Frac>
                  <FracTop>V<Sub>S</Sub></FracTop>
                  <FracBottom>R<Sub>T</Sub></FracBottom>
                </Frac>
                <Paren>)</Paren>
                <span>R<Sub $it>x</Sub></span>
              </BigEq>
              <Para>
                <TextLine $left>Al reordenar los términos se obtiene</TextLine>
              </Para>
              <PartialEq>( R )</PartialEq>
            </PdfSheet>
            <VScroll>
              <ArrowTip />
              <VThumb />
              <ArrowTip $down $mt={626} />
            </VScroll>
          </PdfView>
          <HScroll>
            <HArrow />
            <HThumb />
            <HArrow $right />
          </HScroll>
        </ChromeWindow>
      </Desktop>

      <Taskbar>
        <StartBtn><FaWindows size={21} /></StartBtn>
        <SearchBox>
          <Search size={22} strokeWidth={1.3} />
          <span>Escribe aquí para buscar</span>
        </SearchBox>
        <AppRow>
          <AppSlot $nudge={6}>
            <svg width="20" height="20" viewBox="0 0 20 20">
              <circle cx="10" cy="10" r="7" fill="none" stroke="#fff" strokeWidth="2" />
            </svg>
          </AppSlot>
          <AppSlot><FolderIcon /></AppSlot>
          <AppSlot><EclipseIcon /></AppSlot>
          <AppSlot><EdgeIcon /></AppSlot>
          <AppSlot><MysqlIcon /></AppSlot>
          <AppSlot><ChromeIcon /></AppSlot>
          <AppSlot><NoteIcon /></AppSlot>
          <AppSlot $bar><WordIcon /></AppSlot>
          <AppSlot><IeIcon /></AppSlot>
          <AppSlot $active $bar><VaultIcon /></AppSlot>
          <AppSlot><CubeIcon /></AppSlot>
          <AppSlot><GemIcon /></AppSlot>
          <AppSlot><ScannerIcon /></AppSlot>
          <AppSlot><WhatsIcon /></AppSlot>
          <AppSlot $bar><ChromeIcon badge /></AppSlot>
        </AppRow>
        <Tray>
          <TraySlot><WeatherIcon /></TraySlot>
          <TraySlot $w={62} $fs={17}>18°C</TraySlot>
          <TraySlot><ChevronUp size={20} strokeWidth={1.4} /></TraySlot>
          <TraySlot><CloudIcon /></TraySlot>
          <TraySlot><SyncIcon /></TraySlot>
          <TraySlot><BtIcon /></TraySlot>
          <TraySlot><BatteryIcon /></TraySlot>
          <TraySlot><Volume2 size={21} strokeWidth={1.2} /></TraySlot>
          <TraySlot><WifiIcon /></TraySlot>
          <TraySlot $w={44} $fs={14}>ESP</TraySlot>
          <Clock>16:19<br />29/11/2021</Clock>
          <NotifWrap><NotifIcon /></NotifWrap>
        </Tray>
      </Taskbar>
    </Screen>
  );
}
